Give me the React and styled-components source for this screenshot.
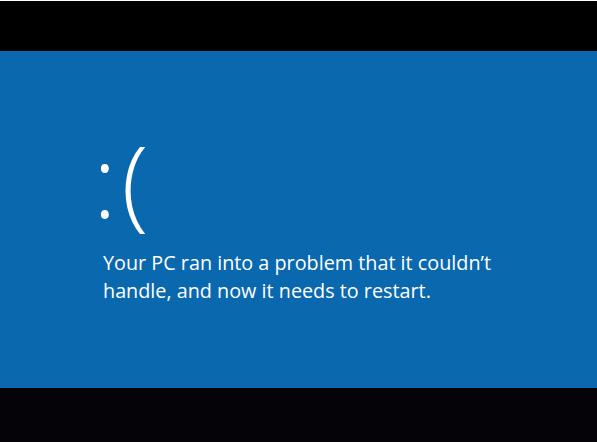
import React from 'react';
import styled, { createGlobalStyle } from 'styled-components';

const GlobalStyle = createGlobalStyle`
  html, body {
    margin: 0;
    padding: 0;
    background: #000;
  }
  body {
    font-family: "Open Sans", "Noto Sans", sans-serif;
  }
`;

const Screen = styled.div`
  width: 597px;
  height: 442px;
  display: flex;
  flex-direction: column;
  background: #020104;
  border-top: 1px solid #fff;
  box-sizing: border-box;
  overflow: hidden;
`;

const Letterbox = styled.div`
  height: ${props => props.size}px;
  flex: none;
  background: ${props => props.bottom ? '#050308' : '#000'};
`;

const Panel = styled.main`
  height: 337px;
  flex: none;
  background: #0a68ae;
  display: flex;
  flex-direction: column;
  padding: 79px 0 0 93px;
  box-sizing: border-box;
  color: #fff;
`;

const Face = styled.div`
  font-family: "Open Sans", sans-serif;
  font-weight: 300;
  font-size: 99px;
  line-height: 1;
  height: 104px;
  letter-spacing: 5px;
`;

const Message = styled.p`
  margin: 15px 0 0 10px;
  font-size: 19.8px;
  line-height: 28px;
  font-weight: 400;
  width: 400px;
`;

export default function App() {
  return (
    <>
      <GlobalStyle />
      <Screen>
        <Letterbox size={50} />
        <Panel>
          <Face>:(</Face>
          <Message>
            Your PC ran into a problem that it couldn’t handle, and now it needs to restart.
          </Message>
        </Panel>
        <Letterbox size={54} bottom />
      </Screen>
    </>
  );
}
